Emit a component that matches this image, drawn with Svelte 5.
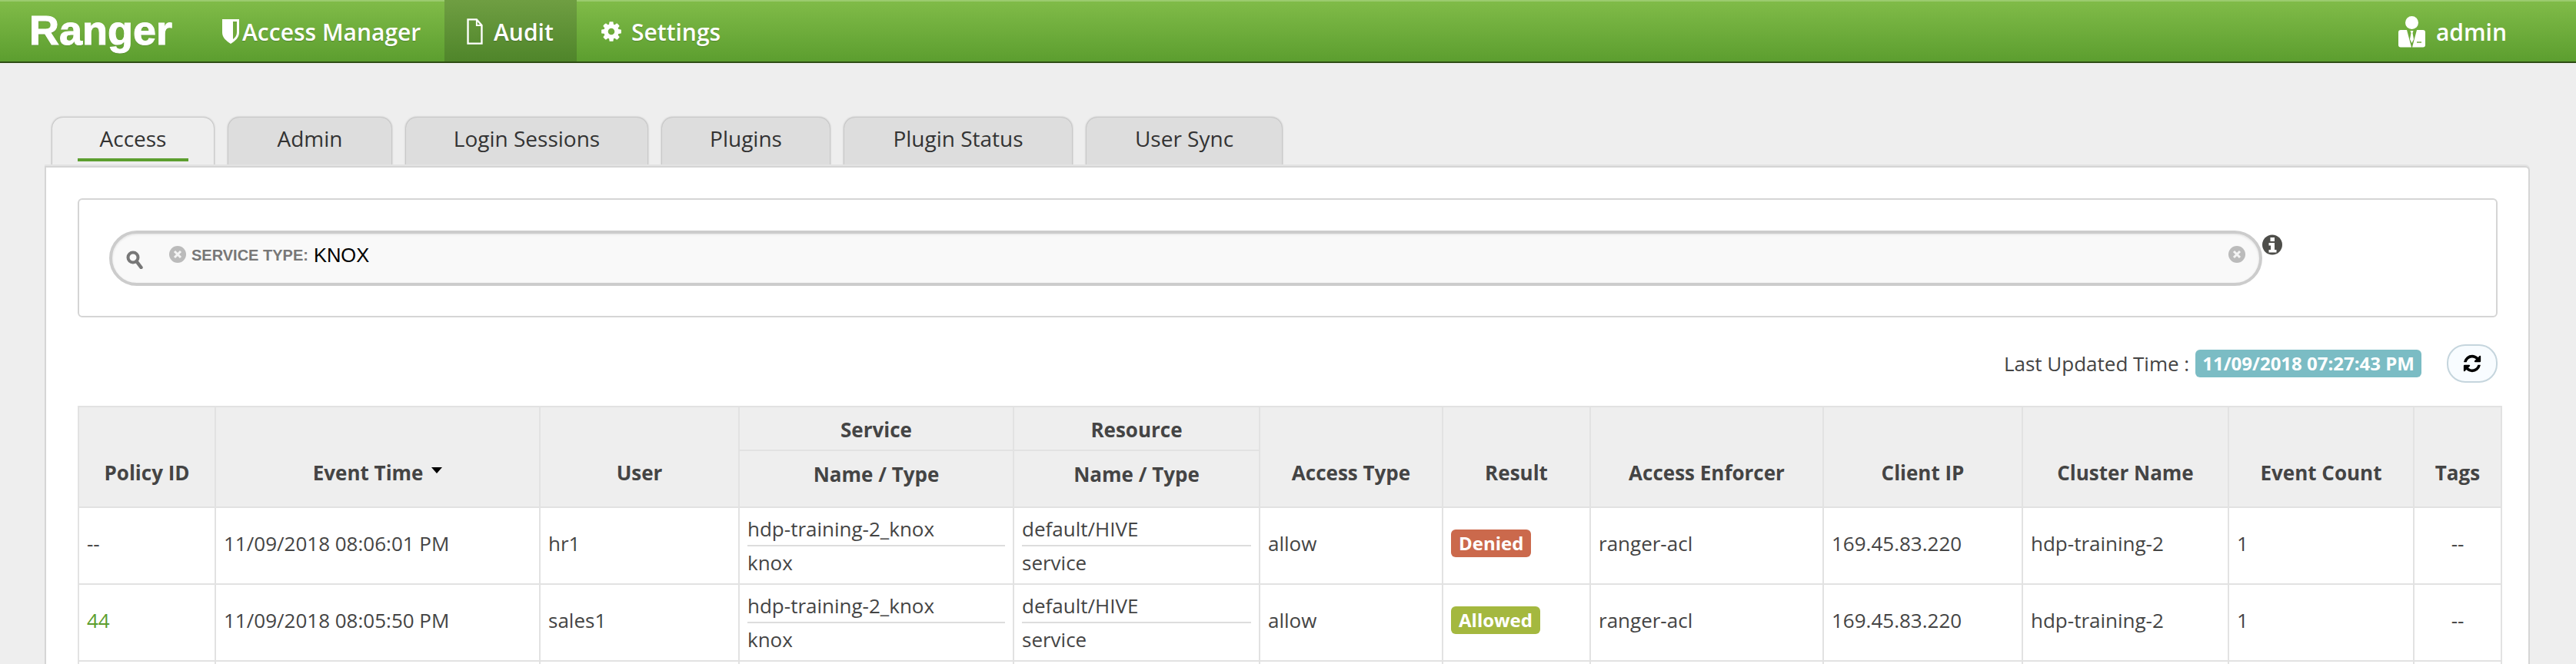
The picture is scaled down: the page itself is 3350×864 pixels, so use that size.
<script>
  const tabs = ['Access', 'Admin', 'Login Sessions', 'Plugins', 'Plugin Status', 'User Sync'];
  const rows = [
    { policy: '--', time: '11/09/2018 08:06:01 PM', user: 'hr1', result: 'Denied' },
    { policy: '44', time: '11/09/2018 08:05:50 PM', user: 'sales1', result: 'Allowed' }
  ];
  const widths = [178, 422, 259, 357, 320, 238, 192, 303, 259, 268, 241, 114];
</script>

<header class="navbar">
  <div class="brand">Ranger</div>
  <nav class="nav-links">
    <a class="nav-item manager">
      <svg class="shield" viewBox="0 0 24 34"><path d="M1 1h22v17c0 7-5 11-11 15C6 29 1 25 1 18z" fill="#fff"/><path d="M15 4h5v14c0 4-2 7-5 9z" fill="#6fa93c"/></svg>
      Access Manager
    </a>
    <a class="nav-item active">
      <svg class="file" viewBox="0 0 22 36"><path d="M1.500 1.500h12l7 8v25h-19z" fill="none" stroke="#fff" stroke-width="2.500"/><path d="M13.500 1.500v8h7" fill="none" stroke="#fff" stroke-width="2"/></svg>
      Audit
    </a>
    <a class="nav-item settings">
      <svg class="cog" viewBox="0 0 1792 1792"><path fill="#fff" d="M1152 896q0-106-75-181t-181-75-181 75-75 181 75 181 181 75 181-75 75-181zm512-109v222q0 12-8 23t-20 13l-185 28q-19 54-39 91 35 50 107 138 10 12 10 25t-9 23q-27 37-99 108t-94 71q-12 0-26-9l-138-108q-44 23-91 38-16 136-29 186-7 27-36 27h-222q-14 0-24.500-8.500t-11.500-21.500l-28-184q-49-16-90-37l-141 107q-10 9-25 9-14 0-25-11-126-114-165-168-7-10-7-23 0-12 8-23 15-21 51-66.500t54-70.500q-27-50-41-99l-183-27q-13-2-21-12.500t-8-23.500v-222q0-12 8-23t19-13l186-28q14-46 39-92-40-57-107-138-10-12-10-24 0-10 9-23 26-36 98.500-107.500t94.500-71.500q13 0 26 10l138 107q44-23 91-38 16-136 29-186 7-27 36-27h222q14 0 24.500 8.500t11.500 21.500l28 184q49 16 90 37l142-107q9-9 24-9 13 0 25 10 129 119 165 170 7 8 7 22 0 12-8 23-15 21-51 66.500t-54 70.500q26 50 41 98l183 28q13 2 21 12.500t8 23.500z"/></svg>
      Settings
    </a>
  </nav>
  <div class="user">
    <svg class="suit" viewBox="0 0 35 41">
      <circle cx="17.500" cy="8.500" r="8.500" fill="#fff"/>
      <path d="M3 18h8l6 22.500H3q-3 0-3-3V21q0-3 3-3zM32 18h-8l-6 22.500h14q3 0 3-3V21q0-3-3-3z" fill="#fff"/>
      <path d="M15.500 19h4l-1 3 1.500 8-2.500 5-2.500-5 1.500-8z" fill="#fff"/>
      <path d="M24 34h6" stroke="#6fa93c" stroke-width="1.500"/>
    </svg>
    admin
  </div>
</header>

<main class="content">
  <ul class="tabs">
    {#each tabs as tab, i}
      <li class="tab" class:selected={i === 0}><span>{tab}</span></li>
    {/each}
  </ul>

  <section class="panel">
    <div class="filter-box">
      <div class="search-pill">
        <svg class="search-icon" viewBox="0 0 22 24"><circle cx="9" cy="9" r="6.500" fill="none" stroke="#777" stroke-width="4"/><path d="M13.500 14l6 8" stroke="#777" stroke-width="4.500" stroke-linecap="round"/></svg>
        <svg class="clear" viewBox="0 0 22 22"><circle cx="11" cy="11" r="11" fill="#bbb"/><path d="M7 7l8 8M15 7l-8 8" stroke="#f4f4f4" stroke-width="3"/></svg>
        <span class="facet-label">SERVICE TYPE:</span>
        <span class="facet-value">KNOX</span>
        <svg class="clear clear-all" viewBox="0 0 22 22"><circle cx="11" cy="11" r="11" fill="#bbb"/><path d="M7 7l8 8M15 7l-8 8" stroke="#f4f4f4" stroke-width="3"/></svg>
      </div>
      <svg class="info" viewBox="0 0 26 27">
        <circle cx="13" cy="13.500" r="13" fill="#4e4e4a"/>
        <rect x="10.500" y="4" width="5.500" height="5" fill="#fff"/>
        <path d="M8.500 11h7.500v9h2.500v3.500h-10V20h2.500v-5.500H8.500z" fill="#fff"/>
      </svg>
    </div>

    <div class="status">
      <span>Last Updated Time :</span>
      <span class="updated">11/09/2018 07:27:43 PM</span>
      <button class="refresh" aria-label="Refresh">
        <svg viewBox="0 0 1792 1792"><path d="M1639 1056q0 5-1 7-64 268-268 434.500t-478 166.500q-146 0-282.500-55t-243.500-157l-129 129q-19 19-45 19t-45-19-19-45v-448q0-26 19-45t45-19h448q26 0 45 19t19 45-19 45l-137 137q71 66 161 102t187 36q134 0 250-65t186-179q11-17 53-117 8-23 30-23h192q13 0 22.500 9.500t9.500 22.500zm25-800v448q0 26-19 45t-45 19h-448q-26 0-45-19t-19-45 19-45l138-138q-148-137-349-137-134 0-250 65t-186 179q-11 17-53 117-8 23-30 23h-199q-13 0-22.500-9.500t-9.500-22.500v-7q65-268 270-434.500t480-166.500q146 0 284 55.500t245 156.500l130-129q19-19 45-19t45 19 19 45z"/></svg>
      </button>
    </div>

    <table class="audit">
      <colgroup>
        {#each widths as w}
          <col style="width: {w}px" />
        {/each}
      </colgroup>
      <thead>
        <tr class="top-row">
          <th rowspan="2">Policy ID</th>
          <th rowspan="2">Event Time <i class="caret"></i></th>
          <th rowspan="2">User</th>
          <th>Service</th>
          <th>Resource</th>
          <th rowspan="2">Access Type</th>
          <th rowspan="2">Result</th>
          <th rowspan="2">Access Enforcer</th>
          <th rowspan="2">Client IP</th>
          <th rowspan="2">Cluster Name</th>
          <th rowspan="2">Event Count</th>
          <th rowspan="2">Tags</th>
        </tr>
        <tr class="sub-row">
          <th>Name / Type</th>
          <th>Name / Type</th>
        </tr>
      </thead>
      <tbody>
        {#each rows as row}
          <tr>
            <td class:link={row.policy !== '--'}>{row.policy}</td>
            <td>{row.time}</td>
            <td>{row.user}</td>
            <td class="stack-cell">
              <div class="stack"><div>hdp-training-2_knox</div><div>knox</div></div>
            </td>
            <td class="stack-cell">
              <div class="stack"><div>default/HIVE</div><div>service</div></div>
            </td>
            <td>allow</td>
            <td><span class="label {row.result.toLowerCase()}">{row.result}</span></td>
            <td>ranger-acl</td>
            <td>169.45.83.220</td>
            <td>hdp-training-2</td>
            <td>1</td>
            <td class="center">--</td>
          </tr>
        {/each}
        <tr class="cut">
          {#each widths as w}
            <td></td>
          {/each}
        </tr>
      </tbody>
    </table>
  </section>
</main>

<style>
  :global(html), :global(body) {
    margin: 0;
    height: 864px;
    overflow: hidden;
    background: #eee;
  }

  :global(body) {
    font-family: "Open Sans", sans-serif;
    color: #444;
  }

  .navbar {
    display: flex;
    align-items: stretch;
    height: 82px;
    box-sizing: border-box;
    padding-left: 38px;
    border-top: 2px solid #9bcb6f;
    border-bottom: 2px solid #2e4d14;
    background: linear-gradient(#80bb48, #5c9e2f);
    color: #fff;
  }

  .brand {
    width: 250px;
    font-family: "Liberation Sans", sans-serif;
    font-weight: 700;
    font-size: 54px;
    line-height: 74px;
    -webkit-text-stroke: 1px #fff;
    text-shadow: 0 1px 1px rgba(0, 0, 0, 0.25);
  }

  .nav-links {
    display: flex;
  }

  .nav-item {
    display: flex;
    align-items: center;
    font-size: 30px;
    font-weight: 600;
    text-shadow: 0 1px 1px rgba(0, 0, 0, 0.2);
  }

  .manager {
    width: 290px;
    gap: 3px;
  }

  .active {
    width: 172px;
    margin-top: -2px;
    padding: 2px 0 0 29px;
    box-sizing: border-box;
    gap: 14px;
    background: linear-gradient(#6f9e42, #4f852a);
  }

  .settings {
    padding-left: 30px;
    gap: 11px;
  }

  .shield { width: 24px; height: 34px; }
  .file { width: 21px; height: 34px; }
  .cog { width: 30px; height: 30px; }

  .user {
    display: flex;
    align-items: center;
    gap: 14px;
    margin-left: auto;
    padding-right: 90px;
    font-size: 30px;
    font-weight: 600;
  }

  .suit { width: 35px; height: 41px; }

  .content {
    height: 782px;
    box-sizing: border-box;
    overflow: hidden;
    padding: 71px 60px 0 58px;
  }

  .tabs {
    display: flex;
    gap: 19px;
    margin: 0;
    padding: 0 0 0 10px;
    list-style: none;
    height: 63px;
  }

  .tab {
    position: relative;
    display: flex;
    justify-content: center;
    box-sizing: border-box;
    height: 63px;
    padding-top: 9px;
    background: #ddd;
    border-radius: 14px 14px 0 0;
    box-shadow: 0 0 3px rgba(0, 0, 0, 0.45);
    font-size: 28px;
    line-height: 36px;
    color: #333;
  }

  .tab:nth-child(1) { width: 210px; }
  .tab:nth-child(2) { width: 212px; }
  .tab:nth-child(3) { width: 314px; }
  .tab:nth-child(4) { width: 218px; }
  .tab:nth-child(5) { width: 296px; }
  .tab:nth-child(6) { width: 254px; }

  .tab.selected {
    background: #eee;
  }

  .tab.selected span {
    align-self: flex-start;
    height: 48px;
    padding: 0 29px;
    box-sizing: border-box;
    border-bottom: 4px solid #5c9e2f;
  }

  .panel {
    position: relative;
    height: 700px;
    box-sizing: border-box;
    padding: 40px 40px 0 41px;
    background: #fff;
    border: 2px solid #d5d5d5;
    border-radius: 6px;
    border-top-left-radius: 0;
    box-shadow: 0 -2px 0 #e3e3e3;
  }

  .filter-box {
    display: flex;
    align-items: flex-start;
    box-sizing: border-box;
    height: 155px;
    padding: 40px 0 0 39px;
    border: 2px solid #d5d5d5;
    border-radius: 6px;
  }

  .search-pill {
    display: flex;
    align-items: flex-start;
    box-sizing: border-box;
    width: 2800px;
    height: 72px;
    padding: 16px 18px 0 18px;
    background: #f9f9f9;
    border: 4px solid #ccc;
    border-radius: 36px;
    box-shadow: inset 0 1px 3px rgba(0, 0, 0, 0.1);
    font-family: "Liberation Sans", sans-serif;
  }

  .search-icon {
    width: 22px;
    height: 24px;
    margin-top: 6px;
  }

  .clear {
    width: 22px;
    height: 22px;
    margin-left: 34px;
  }

  .clear-all {
    margin-left: auto;
  }

  .facet-label {
    margin-left: 7px;
    font-size: 20px;
    font-weight: 700;
    line-height: 24px;
    color: #777;
  }

  .facet-value {
    margin-left: 7px;
    font-size: 25.500px;
    line-height: 24px;
    color: #000;
  }

  .info {
    width: 26px;
    height: 27px;
    margin-top: 5px;
  }

  .status {
    display: flex;
    align-items: center;
    justify-content: flex-end;
    height: 50px;
    margin-top: 35px;
    font-size: 26px;
    gap: 8px;
  }

  .updated {
    box-sizing: border-box;
    height: 36px;
    padding: 0 9px;
    border-radius: 6px;
    background: #7bbcc4;
    color: #fff;
    font-size: 24px;
    font-weight: 700;
    line-height: 36px;
    white-space: nowrap;
  }

  .refresh {
    display: flex;
    align-items: center;
    justify-content: center;
    width: 66px;
    height: 50px;
    margin-left: 25px;
    padding: 0;
    background: #f8fcff;
    border: 2px solid #c5d5dd;
    border-radius: 24px;
  }

  .refresh svg {
    width: 26px;
    height: 26px;
  }

  .audit {
    table-layout: fixed;
    width: 3151px;
    margin-top: 30px;
    border-collapse: collapse;
    font-size: 26px;
    color: #444;
  }

  .audit th,
  .audit td {
    border: 2px solid #e2e2e2;
    padding: 0 10px 7px;
  }

  .audit td.stack-cell {
    padding-bottom: 0;
  }

  .audit th {
    background: #eee;
    font-weight: 700;
    font-size: 26px;
    vertical-align: middle;
    text-align: center;
  }

  .top-row th {
    padding-top: 2px;
    padding-bottom: 0;
  }

  .top-row th[rowspan] {
    padding-top: 40px;
    padding-bottom: 0;
  }

  .sub-row th {
    padding-bottom: 12px;
  }

  .top-row { height: 57px; }
  .sub-row { height: 74px; }

  .audit tbody tr { height: 100px; }

  .cut td { height: 100px; }

  .link { color: #5c9e2f; }
  .center { text-align: center; }

  .caret {
    display: inline-block;
    width: 0;
    height: 0;
    vertical-align: 9px;
    margin-left: 4px;
    border-top: 8px solid #000;
    border-left: 7px solid transparent;
    border-right: 7px solid transparent;
  }

  .stack > div {
    line-height: 42px;
  }

  .stack > div:first-child {
    border-bottom: 2px solid #ddd;
  }

  .label {
    display: inline-block;
    padding: 0 10px;
    height: 36px;
    font-size: 24px;
    line-height: 36px;
    border-radius: 6px;
    color: #fff;
    font-weight: 700;
  }

  .denied { background: #cb694c; }
  .allowed { background: #a4b83f; }
</style>
